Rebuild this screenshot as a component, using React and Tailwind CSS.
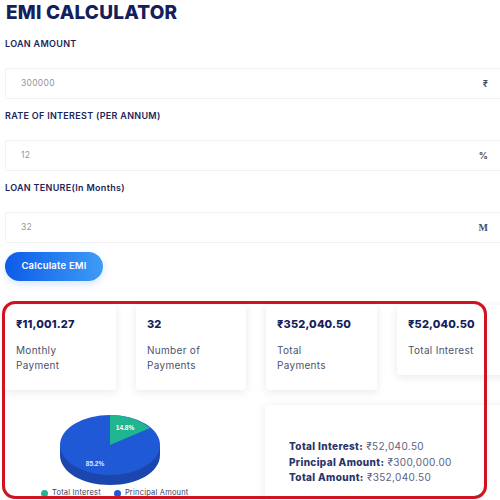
import React from 'react';

const Field = ({ label, value, unit, unitClass = '' }) => (
  <div>
    <label className="block h-[16px] text-[9px] leading-[16px] font-semibold tracking-[0.3px] text-[#1b2559]">{label}</label>
    <div className="mt-[16px] mr-[-20px] h-[31px] flex items-center justify-between pl-[15px] pr-[31px] bg-white border border-[#f1f1f1] rounded-[2px]">
      <span className="text-[8.5px] tracking-[0.3px] text-[#969696]">{value}</span>
      <span className={`text-[9px] font-bold text-[#4a4f6a] ${unitClass}`}>{unit}</span>
    </div>
  </div>
);

const StatCard = ({ amount, title, className = '' }) => (
  <div className={`shrink-0 bg-white rounded-[3px] shadow-[0_2px_9px_rgba(30,40,90,0.10)] pl-[11px] pt-[11px] ${className}`}>
    <div className="text-[11px] leading-[16px] font-extrabold tracking-[0.15px] text-[#14205c] whitespace-nowrap">{amount}</div>
    <div className="mt-[11px] text-[10px] leading-[15px] tracking-[0.3px] text-[#4c5270]">{title}</div>
  </div>
);

const Pie = () => (
  <svg viewBox="0 0 100 70" className="block w-[100px] h-[70px]">
    <path d="M0 30 V40 C0 57 22 70 50 70 C78 70 100 57 100 40 V30 Z" fill="#1a46ad" />
    <ellipse cx="50" cy="30" rx="50" ry="30" fill="#2059d6" />
    <path d="M50 30 V0 C66 0 80 5 90 13 Z" fill="#1fb58f" />
    <text x="65" y="15" textAnchor="middle" fontSize="6.5" fontWeight="700" fill="#fff" fontFamily="Liberation Sans, sans-serif">14.8%</text>
    <text x="35" y="51" textAnchor="middle" fontSize="6.5" fontWeight="700" fill="#dfe8ff" fontFamily="Liberation Sans, sans-serif">85.2%</text>
  </svg>
);

const App = () => {
  return (
    <div className="relative w-[500px] h-[500px] overflow-hidden bg-white font-['Inter',sans-serif]">
      <div className="pl-[5px] pt-[2px]">
        <h1 className="h-[22px] pl-[1px] text-[19px] leading-[22px] font-extrabold tracking-[0.2px] text-[#13205c]">EMI CALCULATOR</h1>

        <div className="mt-[12px] flex flex-col gap-[9px]">
          <Field label="LOAN AMOUNT" value="300000" unit="₹" />
          <Field label="RATE OF INTEREST (PER ANNUM)" value="12" unit="%" />
          <Field label="LOAN TENURE(In Months)" value="32" unit="M" unitClass="font-['Liberation_Serif',serif] text-[10px]" />
        </div>

        <button className="block mt-[9px] w-[98px] h-[29px] rounded-full bg-gradient-to-r from-[#0f5ae8] to-[#3f9bf5] text-[9.5px] font-semibold tracking-[0.2px] text-white shadow-[0_3px_8px_rgba(40,110,240,0.18)]">
          Calculate EMI
        </button>

        <div className="mt-[24px] flex items-start gap-[20px]">
          <StatCard amount="₹11,001.27" title={<>Monthly<br />Payment</>} className="w-[111px] h-[85px]" />
          <StatCard amount="32" title={<>Number of<br />Payments</>} className="w-[110px] h-[85px]" />
          <StatCard amount="₹352,040.50" title={<>Total<br />Payments</>} className="w-[111px] h-[85px]" />
          <StatCard amount="₹52,040.50" title="Total Interest" className="w-[120px] h-[70px]" />
        </div>

        <div className="mt-[15px] flex items-start">
          <div className="shrink-0 w-[260px] flex flex-col pt-[10px]">
            <div className="ml-[55px]"><Pie /></div>
            <div className="mt-[3px] ml-[36px] flex items-center gap-[13px] text-[7.5px] leading-[10px] tracking-[0.2px] text-[#3a4066]">
              <span className="flex items-center gap-[4px]"><i className="w-[7px] h-[7px] rounded-full bg-[#1fb58f]" />Total Interest</span>
              <span className="flex items-center gap-[4px]"><i className="w-[7px] h-[7px] rounded-full bg-[#2059d6]" />Principal Amount</span>
            </div>
          </div>
          <div className="shrink-0 w-[240px] h-[100px] pl-[24px] pt-[34px] bg-white rounded-[3px] shadow-[0_1px_8px_rgba(30,40,90,0.10)] text-[10px] leading-[15.5px] tracking-[0.35px] text-[#5c6280]">
            <p><b className="font-extrabold text-[#2a3468]">Total Interest:</b> ₹52,040.50</p>
            <p><b className="font-extrabold text-[#2a3468]">Principal Amount:</b> ₹300,000.00</p>
            <p><b className="font-extrabold text-[#2a3468]">Total Amount:</b> ₹352,040.50</p>
          </div>
        </div>
      </div>

      {/* annotation frame drawn over the results */}
      <div className="absolute left-[2px] top-[301px] w-[485px] h-[198px] border-[3px] border-[#d0141f] rounded-[13px] pointer-events-none" />
    </div>
  );
};

export default App;
